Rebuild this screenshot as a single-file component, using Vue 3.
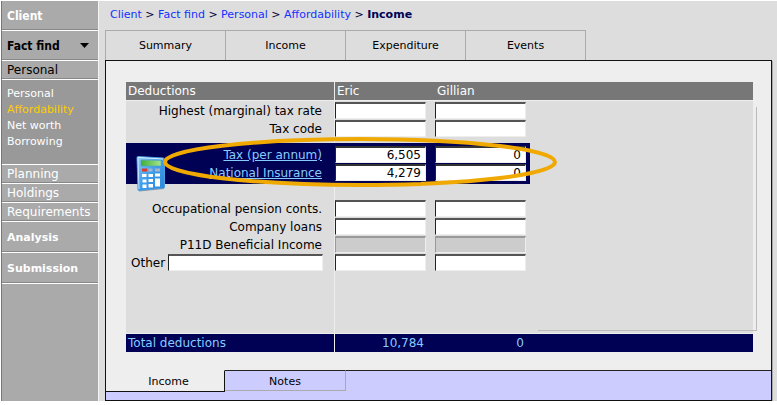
<script setup>
import { ref } from 'vue'

// Navigation
const crumbs = ['Client', 'Fact find', 'Personal', 'Affordability']
const personalLinks = ['Personal', 'Affordability', 'Net worth', 'Borrowing']
const sections = ['Planning', 'Holdings', 'Requirements']
const tabs = ['Summary', 'Income', 'Expenditure', 'Events']
const currentLink = ref('Affordability')

// Deduction rows
const otherName = ref('')
const topRows = ref([
  { id: 'rate', label: 'Highest (marginal) tax rate', eric: '', gillian: '' },
  { id: 'code', label: 'Tax code', eric: '', gillian: '' }
])
const calcRows = ref([
  { id: 'tax', label: 'Tax (per annum)', eric: '6,505', gillian: '0' },
  { id: 'ni', label: 'National Insurance', eric: '4,279', gillian: '0' }
])
const bottomRows = ref([
  { id: 'pension', label: 'Occupational pension conts.', eric: '', gillian: '' },
  { id: 'loans', label: 'Company loans', eric: '', gillian: '' },
  { id: 'p11d', label: 'P11D Beneficial Income', eric: '', gillian: '', disabled: true }
])
const other = ref({ eric: '', gillian: '' })
</script>

<template>
  <div class="page">
    <nav class="sidebar">
      <button class="side-item big bold narrow">Client</button>
      <button class="side-item big bold narrow dark">
        Fact find
        <svg class="arrow" viewBox="0 0 9 5" aria-hidden="true"><path d="M0 0h9L4.500 5z" fill="#000" /></svg>
      </button>
      <button class="side-item dark">Personal</button>
      <div class="sub-menu">
        <a
          v-for="link in personalLinks"
          :key="link"
          href="#"
          :class="{ current: link === currentLink }"
          @click.prevent="currentLink = link"
        >{{ link }}</a>
      </div>
      <button v-for="name in sections" :key="name" class="side-item">{{ name }}</button>
      <button class="side-item big bold">Analysis</button>
      <button class="side-item big bold">Submission</button>
    </nav>

    <main class="content">
      <div class="crumbs">
        <template v-for="crumb in crumbs" :key="crumb">
          <a href="#">{{ crumb }}</a> &gt;&#32;
        </template>
        <strong>Income</strong>
      </div>

      <div class="tabs">
        <button v-for="tab in tabs" :key="tab" class="tab">{{ tab }}</button>
      </div>

      <section class="panel">
        <div class="sheet">
          <table class="grid">
            <colgroup>
              <col class="col-label" />
              <col class="col-eric" />
              <col class="col-gillian" />
              <col />
            </colgroup>
            <thead>
              <tr>
                <th class="first">Deductions</th>
                <th>Eric</th>
                <th>Gillian</th>
                <th></th>
              </tr>
            </thead>
            <tbody>
              <tr class="gap-small"><td class="first"></td><td colspan="3"></td></tr>
              <tr v-for="row in topRows" :key="row.id">
                <td class="first label"><label :for="row.id">{{ row.label }}</label></td>
                <td><input :id="row.id" v-model="row.eric" type="text" /></td>
                <td><input v-model="row.gillian" type="text" :aria-label="row.label + ' Gillian'" /></td>
                <td></td>
              </tr>
              <tr class="gap-top"><td class="first"></td><td colspan="3"></td></tr>
            </tbody>
            <tbody class="calc">
              <tr class="calc-top"><td colspan="3"></td><td></td></tr>
              <tr v-for="row in calcRows" :key="row.id">
                <td class="first label"><a href="#">{{ row.label }}</a></td>
                <td><input v-model="row.eric" type="text" :aria-label="row.label + ' Eric'" /></td>
                <td><input v-model="row.gillian" type="text" :aria-label="row.label + ' Gillian'" /></td>
                <td></td>
              </tr>
              <tr class="calc-end"><td colspan="3"></td><td></td></tr>
            </tbody>
            <tbody>
              <tr class="gap-mid"><td class="first"></td><td colspan="3"></td></tr>
              <tr v-for="row in bottomRows" :key="row.id">
                <td class="first label"><label :for="row.id">{{ row.label }}</label></td>
                <td><input :id="row.id" v-model="row.eric" type="text" :disabled="row.disabled" /></td>
                <td>
                  <input
                    v-model="row.gillian"
                    type="text"
                    :disabled="row.disabled"
                    :aria-label="row.label + ' Gillian'"
                  />
                </td>
                <td></td>
              </tr>
              <tr>
                <td class="first">
                  <div class="other">
                    <label for="other">Other</label>
                    <input id="other" v-model="otherName" type="text" />
                  </div>
                </td>
                <td><input v-model="other.eric" type="text" aria-label="Other Eric" /></td>
                <td><input v-model="other.gillian" type="text" aria-label="Other Gillian" /></td>
                <td></td>
              </tr>
              <tr class="gap-end"><td class="first"></td><td colspan="3"></td></tr>
            </tbody>
            <tfoot>
              <tr>
                <td class="first">Total deductions</td>
                <td class="total">10,784</td>
                <td class="total last">0</td>
                <td></td>
              </tr>
            </tfoot>
          </table>

          <svg class="calculator" viewBox="0 0 30 36" aria-hidden="true">
            <defs>
              <linearGradient id="body" x1="0" y1="0" x2="1" y2="1">
                <stop offset="0" stop-color="#8fcdf8" />
                <stop offset="0.500" stop-color="#3f9cea" />
                <stop offset="1" stop-color="#2c86dc" />
              </linearGradient>
              <linearGradient id="screen" x1="0" y1="0" x2="1" y2="0">
                <stop offset="0" stop-color="#3fae3a" />
                <stop offset="1" stop-color="#a5e58a" />
              </linearGradient>
            </defs>
            <path d="M3 35.500L28 33V31L3 33z" fill="#777" opacity="0.700" />
            <path d="M1 1.500Q1 0.500 2 0.500L27 2Q28.500 2.100 28.500 3V31Q28.500 32 27.500 32L3 34.500Q2 34.500 2 33.500z" fill="url(#body)" stroke="#4a9de0" />
            <path d="M2 1.500L27 3" stroke="#d8f0ff" fill="none" />
            <path d="M2 2L3 33" stroke="#c6e8ff" fill="none" />
            <path d="M5 4L25 4.500V10H5z" fill="url(#screen)" stroke="#4f9fc0" stroke-width="0.600" />
            <path d="M6 12.500h5v3H6z" fill="#dc3b2b" />
            <path d="M12.500 12.500h4v3h-4zM19 12.500h5v3h-5z" fill="#a9b3c6" />
            <path d="M6 18h4.500v3H6zM12.500 18h4.500v3h-4.500zM19 17.500h5v3h-5zM6.500 23.500h4v3h-4zM12.500 23h4.500v3h-4.500zM19 22.500h5v8h-5zM6.500 28.500h4v3.500h-4zM12.500 28h4.500v3.500h-4.500z" fill="#fff" />
          </svg>
          <svg class="ring" viewBox="0 0 396 52" aria-hidden="true">
            <ellipse cx="198" cy="26" rx="195" ry="23" fill="none" stroke="#f0a900" stroke-width="4" />
          </svg>
        </div>

        <div class="bottom-bar">
          <button class="bottom-tab open">Income</button>
          <button class="bottom-tab">Notes</button>
          <span class="filler"></span>
        </div>
      </section>
    </main>
  </div>
</template>

<style>
body {
  background: #fff;
  font-family: "DejaVu Sans", Verdana, sans-serif;
  font-size: 11px;
  color: #000;
}
</style>

<style scoped>
.page {
  display: flex;
  padding: 1px 0 0 1px;
}

button,
input {
  font: inherit;
  color: inherit;
}

button {
  border: none;
  padding: 0;
  background: none;
  cursor: pointer;
}

/* Sidebar */
.sidebar {
  display: flex;
  flex-direction: column;
  flex: none;
  width: 96px;
  border-left: 1px solid #777;
  border-right: 1px solid #f4f4f4;
  background: #aaa;
}

.side-item {
  display: flex;
  align-items: center;
  height: 19px;
  padding: 0 4px 0 5px;
  border-bottom: 1px solid #fff;
  box-shadow: inset 0 -1px #888;
  color: #fff;
  font-size: 12px;
  text-align: left;
  white-space: nowrap;
}

.side-item.big {
  height: 31px;
  font-size: 11px;
}

.bold {
  font-weight: bold;
}

.side-item.narrow {
  height: 30px;
  font-family: "DejaVu Sans Condensed", "DejaVu Sans", sans-serif;
  font-size: 12px;
}

.side-item.dark {
  color: #000;
}

.arrow {
  width: 9px;
  height: 5px;
  margin: 0 5px 0 auto;
}

.sub-menu {
  display: flex;
  flex-direction: column;
  height: 85px;
  box-sizing: border-box;
  padding: 6px 5px 0;
  border-bottom: 1px solid #fff;
  background: #999;
}

.sub-menu a {
  line-height: 16px;
  color: #fff;
  text-decoration: none;
  white-space: nowrap;
}

.sub-menu a.current {
  color: #fc0;
}

/* Content */
.content {
  flex: 1;
  min-width: 0;
  padding: 0 5px 0 6px;
  background: #ddd;
}

.crumbs {
  padding: 0 5px;
  line-height: 28px;
  height: 29px;
  color: #003;
}

.crumbs a {
  color: #13f;
  text-decoration: none;
}

.crumbs strong {
  color: #005;
}

.tabs {
  display: flex;
}

.tab {
  width: 120px;
  height: 30px;
  border-top: 1px solid #aaa;
  border-left: 1px solid #aaa;
}

.tab:last-child {
  width: 121px;
  border-right: 1px solid #aaa;
}

.panel {
  border: 1px solid #111;
  background: #eee;
  box-shadow: 1px 1px #aaa;
}

.sheet {
  position: relative;
  padding: 21px 18px 18px 20px;
}

.sheet::after {
  content: '';
  position: absolute;
  top: 46px;
  right: 14px;
  bottom: 39px;
  left: 432px;
  border-right: 1px solid #bbb;
  border-bottom: 1px solid #bbb;
  pointer-events: none;
}

/* Deductions table */
.grid {
  width: 100%;
  border-collapse: separate;
  border-spacing: 0;
  table-layout: fixed;
  background: #ddd;
  font-size: 12px;
}

.col-label {
  width: 209px;
}

.col-eric {
  width: 100px;
}

.col-gillian {
  width: 95px;
}

th,
td {
  height: 18px;
  padding: 0;
  line-height: 18px;
  white-space: nowrap;
  vertical-align: top;
}

th {
  padding-left: 2px;
  border-bottom: 1px solid #eee;
  background: #777;
  color: #fff;
  font-weight: normal;
  text-align: left;
}

.first {
  border-right: 1px solid #eee;
}

.label {
  padding-right: 12px;
  text-align: right;
}

.grid input {
  display: block;
  width: 91px;
  height: 17px;
  box-sizing: border-box;
  margin: 0;
  padding: 0 4px;
  border: 1px solid #eee;
  border-top: 2px solid #555;
  border-left-color: #222;
  border-radius: 0;
  background: #fff;
  text-align: right;
}

.grid input:disabled {
  border-top-color: #999;
  border-left-color: #999;
  background: #ccc;
}

.other {
  display: flex;
  gap: 3px;
  padding: 0 11px 0 5px;
}

.grid .other input {
  flex: 1;
  width: 0;
  text-align: left;
}

.gap-small td {
  height: 1px;
}

.gap-top td {
  height: 5px;
}

.gap-mid td {
  height: 16px;
}

.gap-end td {
  height: 61px;
}

.calc td:not(:last-child) {
  border-color: #005;
  background: #005;
}

.calc a {
  color: #8cf;
}

.calc-top td {
  height: 3px;
}

.calc-end td {
  height: 2px;
}

.calc input {
  border-top-color: #333;
}

tfoot td {
  border-top: 1px solid #eee;
  background: #005;
  color: #8cf;
}

tfoot .first {
  padding-left: 2px;
}

tfoot .total {
  padding-right: 11px;
  text-align: right;
}

tfoot .last {
  padding-right: 6px;
}

/* Drawn over the table */
.calculator {
  position: absolute;
  top: 95px;
  left: 30px;
  width: 30px;
  height: 36px;
}

.ring {
  position: absolute;
  top: 75px;
  left: 56px;
  width: 396px;
  height: 52px;
  pointer-events: none;
}

/* Bottom tabs */
.bottom-bar {
  display: flex;
  align-items: flex-start;
  padding-bottom: 8px;
  background: #ccf;
}

.bottom-tab {
  width: 121px;
  height: 21px;
  padding-top: 2px;
  border-top: 1px solid #222;
  border-right: 1px solid #aaa;
  border-bottom: 1px solid #aaa;
}

.bottom-tab.open {
  width: 119px;
  height: 22px;
  padding: 0 0 0 7px;
  border-top-color: #eee;
  border-right: 1px solid #111;
  border-bottom: 1px solid #111;
  background: #eee;
}

.filler {
  flex: 1;
  align-self: stretch;
  border-top: 1px solid #222;
}
</style>
